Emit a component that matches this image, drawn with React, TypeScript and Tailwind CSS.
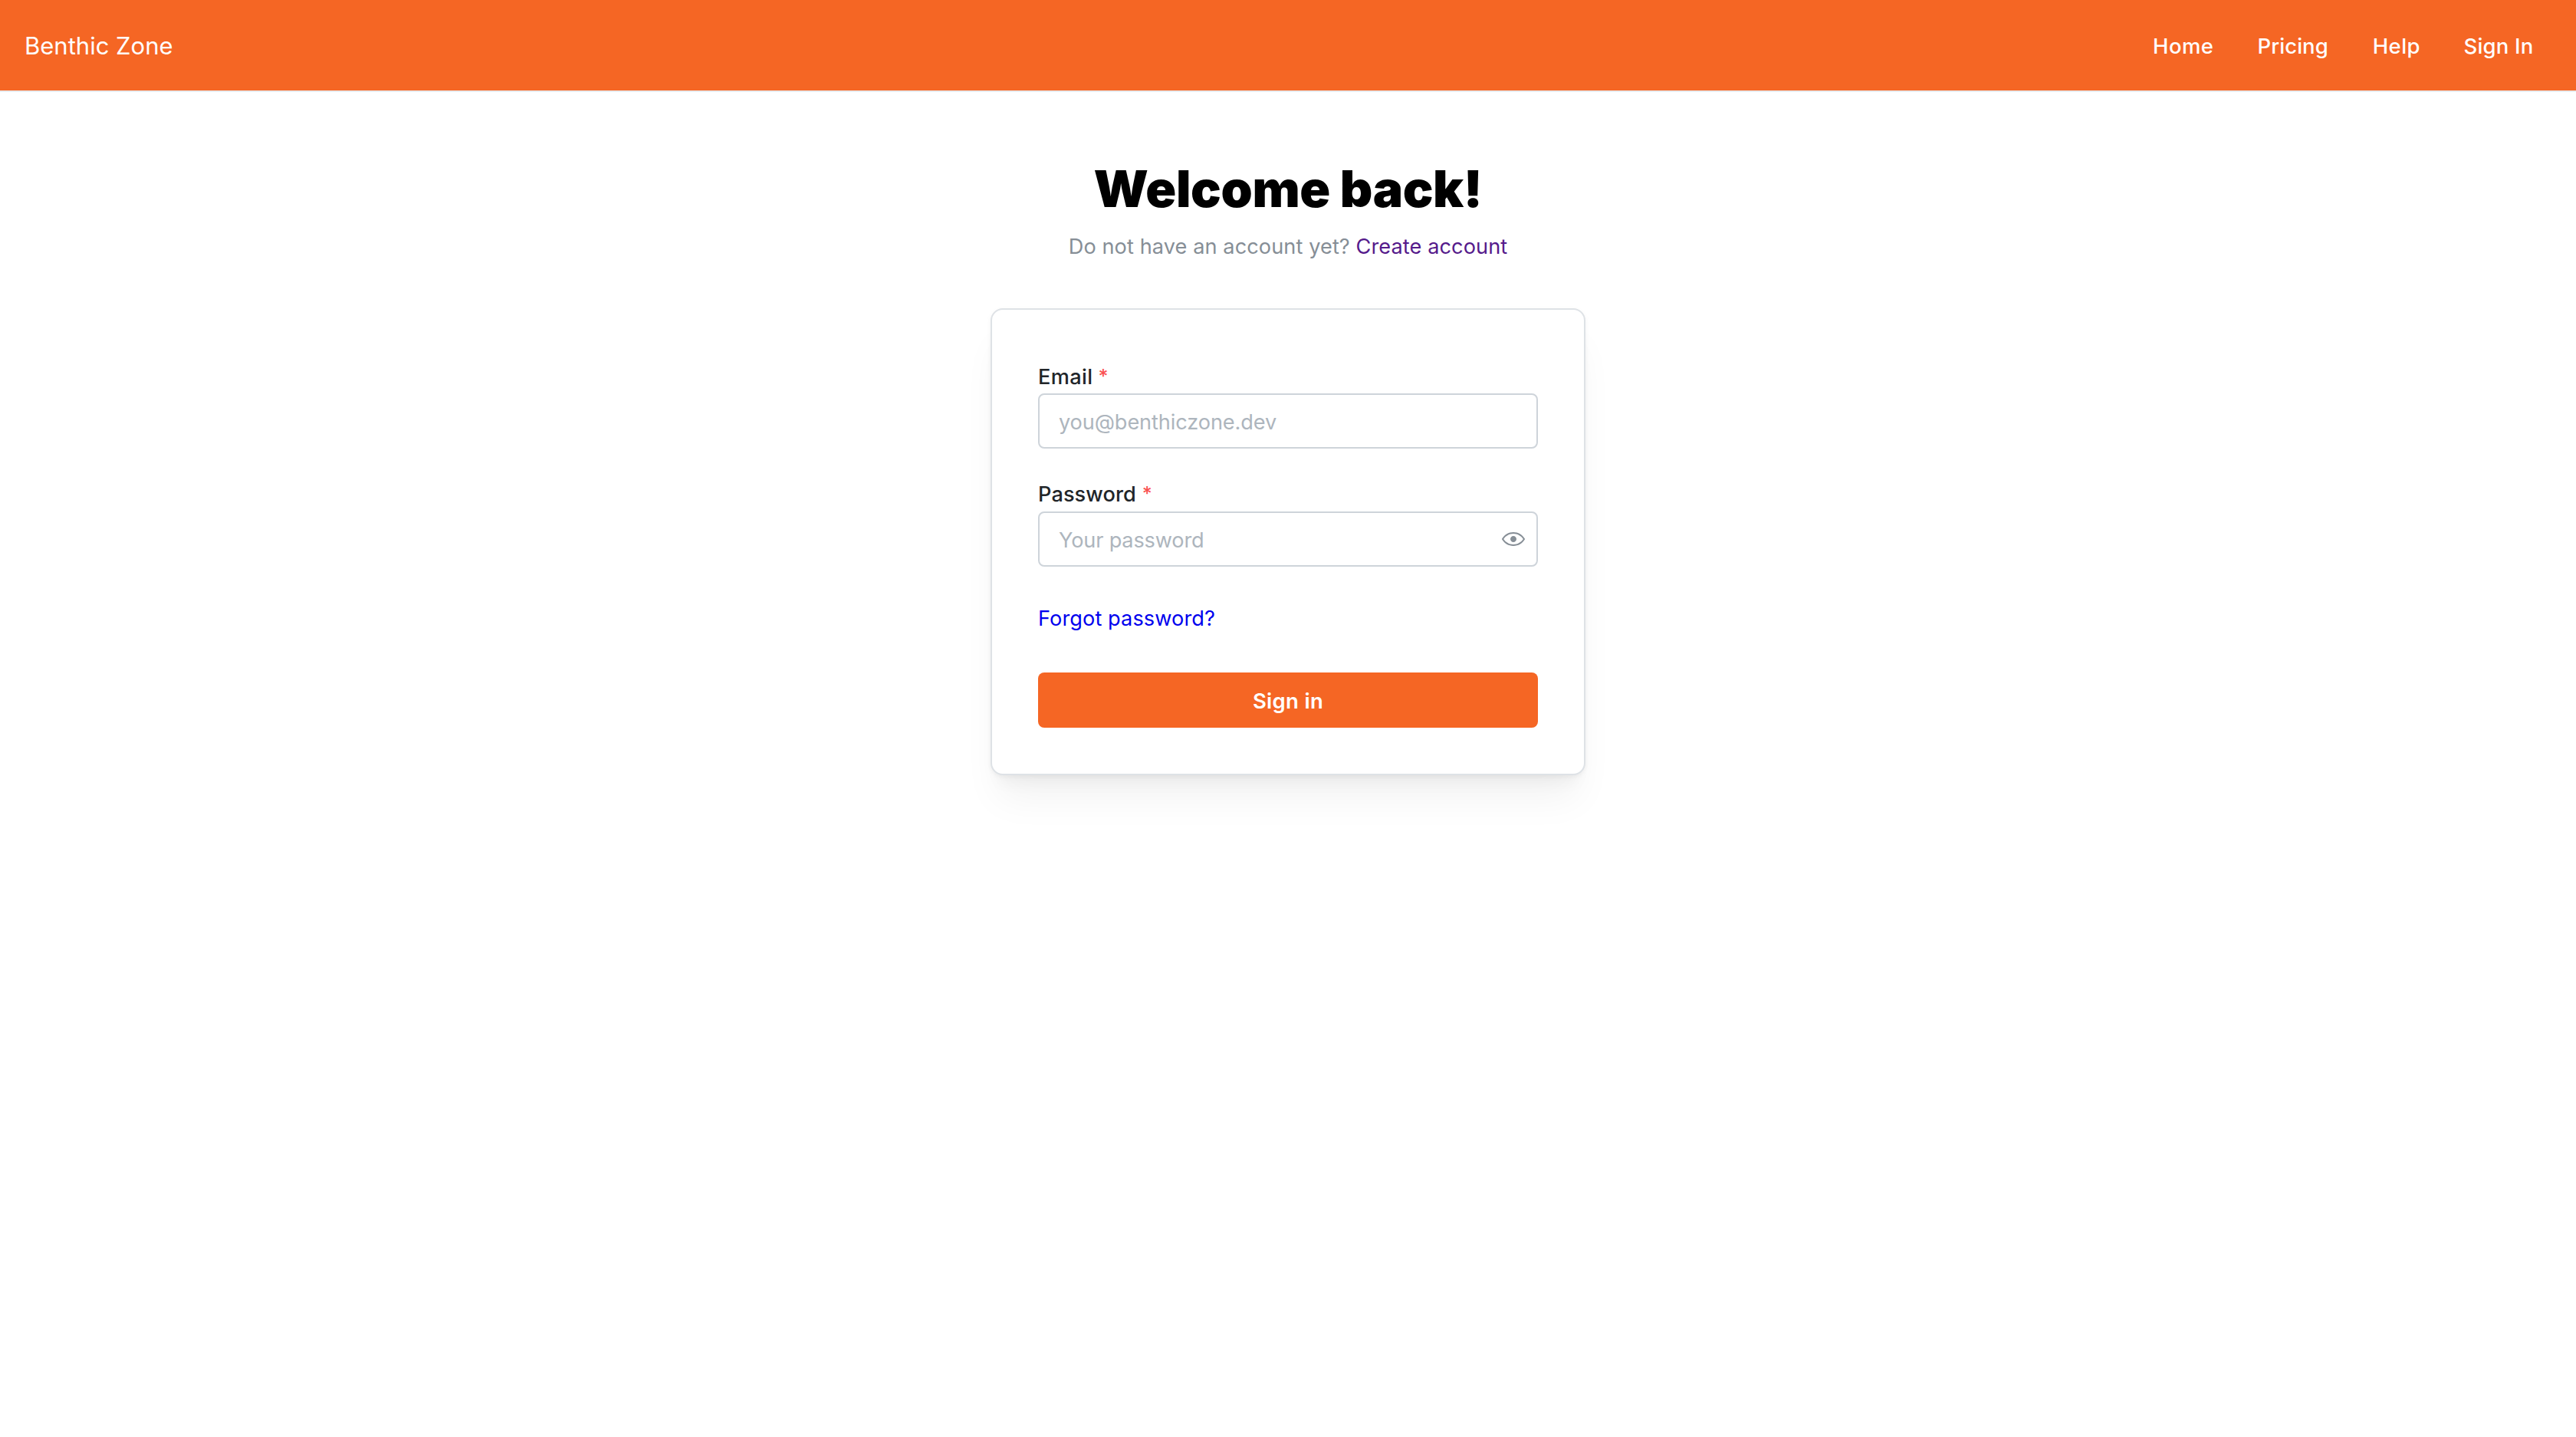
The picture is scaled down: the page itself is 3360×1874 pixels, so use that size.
const EYE =
  "M7.5 11C4.80285 11 2.52952 9.62184 1.09622 7.50001C2.52952 5.37816 4.80285 4 7.5 4C10.1971 4 12.4705 5.37816 13.9038 7.50001C12.4705 9.62183 10.1971 11 7.5 11ZM7.5 3C4.30786 3 1.65639 4.70638 0.0760002 7.23501C-0.0253338 7.39715 -0.0253334 7.60288 0.0760014 7.76501C1.65639 10.2936 4.30786 12 7.5 12C10.6921 12 13.3436 10.2936 14.924 7.76501C15.0253 7.60288 15.0253 7.39715 14.924 7.23501C13.3436 4.70638 10.6921 3 7.5 3ZM7.5 9.5C8.60457 9.5 9.5 8.60457 9.5 7.5C9.5 6.39543 8.60457 5.5 7.5 5.5C6.39543 5.5 5.5 6.39543 5.5 7.5C5.5 8.60457 6.39543 9.5 7.5 9.5Z";

function Header() {
  return (
    <header className="flex h-[120px] items-center justify-between border-b-2 border-[#e9ecef] bg-[#f56624] px-8 pt-px text-white">
      <div className="text-[31px]">Benthic Zone</div>
      <nav className="flex gap-2.5 pt-px text-[27.5px] font-medium">
        <a href="#" className="w-[126.5px] pl-6 tracking-[0.4px]">Home</a>
        <a href="#" className="w-[140.2px] pl-6 tracking-[0.05px]">Pricing</a>
        <a href="#" className="w-[108.8px] pl-6 tracking-[0.4px]">Help</a>
        <a href="#" className="w-[138.5px] pl-6 tracking-[0.2px]">Sign In</a>
      </nav>
    </header>
  );
}

export default function App() {
  return (
    <div className="min-h-[1874px] bg-white font-['Inter',sans-serif] text-[27.16px] leading-[45px] text-black">
      <Header />
      <main className="mx-auto w-[776px] pt-[82px]">
        <h1 className="text-center text-[66px] leading-[88px] font-black tracking-[-0.36px]">Welcome back!</h1>
        <p className="mt-[9px] text-center tracking-[0.08px] text-[#868e96]">
          Do not have an account yet?{" "}
          <a href="#" className="text-[#551a8b]">Create account</a>
        </p>
        <form className="mt-[58px] flex flex-col rounded-2xl border-2 border-[#dee2e6] bg-white px-[60px] pt-[65px] pb-[60px] shadow-[0_2px_6px_rgba(0,0,0,0.05),0_40px_50px_-10px_rgba(0,0,0,0.05),0_20px_20px_-10px_rgba(0,0,0,0.04)]">
          <label htmlFor="email" className="flex h-11 font-medium text-[#212529]">
            <span className="tracking-[0.4px]">Email</span>
            <span className="ml-[7px] text-[25px] text-[#fa5252]">*</span>
          </label>
          <input
            id="email"
            type="email"
            placeholder="you@benthiczone.dev"
            className="h-[72px] rounded-lg border-2 border-[#ced4da] px-[25px] pt-[3px] tracking-[-0.11px] placeholder:text-[#adb5bd]"
          />
          <label htmlFor="password" className="mt-[37px] mb-px flex h-11 font-medium text-[#212529]">
            <span className="tracking-[0.08px]">Password</span>
            <span className="ml-2 text-[25px] text-[#fa5252]">*</span>
          </label>
          <div className="flex h-[72px] items-center rounded-lg border-2 border-[#ced4da] pr-[15px] pl-[25px]">
            <input
              id="password"
              type="password"
              placeholder="Your password"
              className="h-full grow pt-[3px] tracking-[-0.18px] placeholder:text-[#adb5bd]"
            />
            <svg className="size-[30px] text-[#868e96]" viewBox="0 0 15 15" fill="currentColor" fillRule="evenodd">
              <path d={EYE} />
            </svg>
          </div>
          <a href="#" className="mt-[45px] self-start tracking-[0.09px] text-[#0000ee]">Forgot password?</a>
          <button
            type="button"
            className="mt-12 h-[72px] rounded-lg bg-[#f56624] pt-0.5 text-[27.5px] font-semibold tracking-[0.3px] text-white"
          >
            Sign in
          </button>
        </form>
      </main>
    </div>
  );
}
